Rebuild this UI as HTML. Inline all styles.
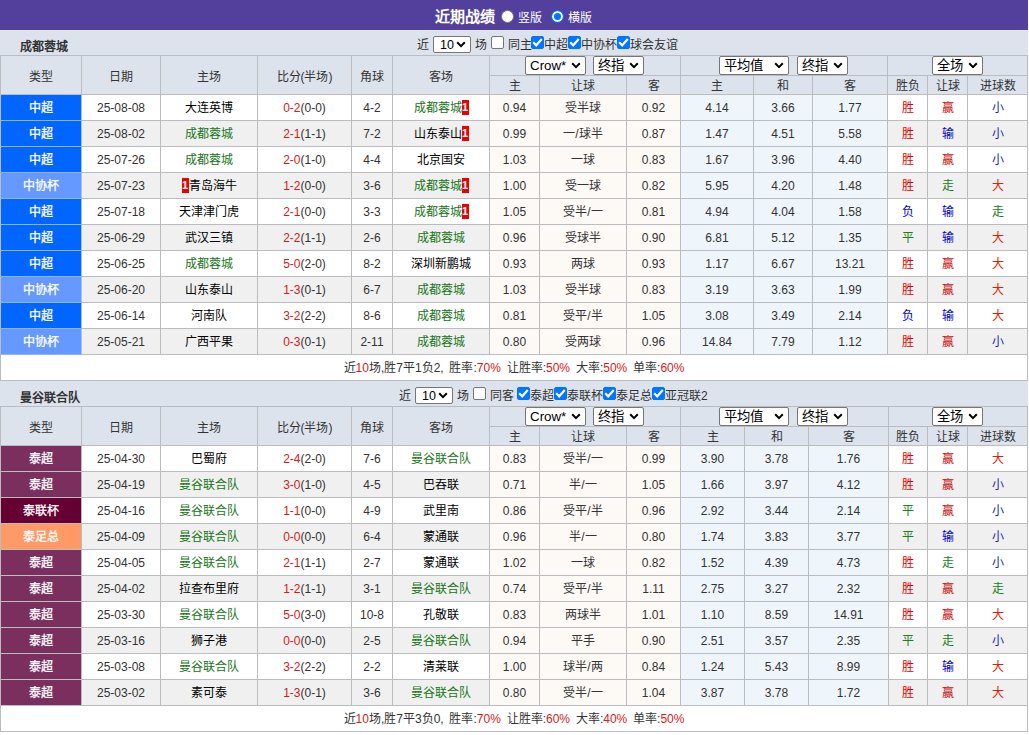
<!DOCTYPE html><html lang="zh-CN"><head><meta charset="utf-8"><style>html,body{margin:0;padding:0;background:#fff;}
body{width:1029px;height:735px;overflow:hidden;font-family:"Liberation Sans",sans-serif;font-size:12px;color:#333;}
#wrap{width:1028px;position:relative;}
.title{height:30px;background:#52409c;border-bottom:1px solid #e6e6fa;position:relative;color:#fff;}
.title b{position:absolute;left:435px;top:7px;font-size:15px;line-height:20px;}
.title .rd{position:absolute;top:10px;width:11px;height:11px;border-radius:50%;background:#fff;border:1px solid #767676;}
.title .rd{left:501px;}
.title .rd.on{left:551px;border:1px solid #0075ff;background:#0075ff;box-shadow:inset 0 0 0 2px #fff;}
.title .rt{position:absolute;top:10px;line-height:16px;font-size:12px;}
.title .rt{left:518px;}
.title .rd.on + .rt{left:568px;}
.band{height:25px;background:#dce3ed;position:relative;}
.band .tn{position:absolute;left:20px;top:9px;line-height:16px;font-size:12px;color:#333;}
.band .ct{position:absolute;top:7px;line-height:17px;white-space:nowrap;}
.band .sel.num{position:absolute;top:6px;width:38px;height:17px;font-size:13.33px;line-height:15px;}
.band .cbw{position:absolute;top:6px;height:13px;}
.sel{display:inline-block;position:relative;box-sizing:border-box;height:18px;border:1px solid #767676;border-radius:2px;background:#fff;color:#000;font-size:13.33px;line-height:16px;padding-left:4px;text-align:left;}
.sel .chev{position:absolute;right:4px;top:5px;}
.band .sel.num .chev{top:4px;}
.sel.num .n{font-size:12.5px;padding-left:2px;}
.cb{display:block;box-sizing:border-box;width:13px;height:13px;border:1px solid #767676;border-radius:2px;background:#fff;position:relative;}
.cb.on{background:#0075ff;border-color:#0075ff;}
.cb svg{position:absolute;left:-1px;top:-1px;}
.tb{border-collapse:collapse;table-layout:fixed;width:1028px;}
.tb th,.tb td{border:1px solid #babcc0;padding:0;text-align:center;font-weight:normal;white-space:nowrap;overflow:hidden;}
.tb th{background:#dce3ed;color:#333;}
.tb tr.h1 th{height:19px;line-height:19px;}
.tb tr.h1 th[rowspan]{padding-top:4px;line-height:34px;height:34px;}
.tb tr.h2 th{height:16px;line-height:16px;padding-top:2px;}
.tb td{height:24px;line-height:24px;padding-top:1px;}
.tb tr.ev td{background:#f0f0f0;}
.tb td.cr{background:#fdf9f5 !important;}
.tb td.av{background:#eff6fb !important;}
.tb td.ty{color:#fff;-webkit-text-stroke:0.3px #fff;}
.tb td.tb_{background:#0066ff;}
.tb tr td.tb{background:#0066ff;}
.tb tr td.tl{background:#6699ff;}
.tb tr td.tm{background:#7a2f5e;}
.tb tr td.td{background:#660033;}
.tb tr td.to{background:#ff9966;}
.tb th.sc{text-align:left;position:relative;}
.sel.hs{position:absolute;top:0;height:19px;line-height:17px;}
.tb tr.sum td{background:#fff;word-spacing:2.5px;padding-top:2px;line-height:23px;height:23px;}
.r{color:#d41a1a;}
.g{color:#167516;}
.k{color:#000;}
.bd{display:inline-block;font-style:normal;background:#e00;color:#fff;width:7px;height:15px;line-height:15px;font-size:11px;font-weight:bold;vertical-align:middle;text-align:center;position:relative;top:-1px;}
.cw{color:#dd0000;}
.cw2{color:#c81010;}
.cl{color:#0000cc;}
.cd{color:#1a801a;}
.cbig{color:#dd2200;}
.csm{color:#2424b4;}
.tb tr td.tb,.tb tr td.tl{border-top-color:#8fb5f7;border-bottom-color:#8fb5f7;border-right-color:#a3c2fa;}
.band.b1{height:24px;}
.band.b1 .tn{top:8px;}
.band.b1 .ct{top:6px;}
.band.b1 .sel.num,.band.b1 .cbw{top:5px;}
</style></head><body><div id="wrap"><div class="title"><b>近期战绩</b><span class="rd"></span><span class="rt">竖版</span><span class="rd on"></span><span class="rt">横版</span></div><div class="band b1"><b class="tn">成都蓉城</b><span class="ct" style="left:417px">近</span><span class="sel num" style="left:433px"><span class="n">10</span><svg class="chev" width="10" height="7" viewBox="0 0 10 7"><path d="M1.2 1.3 L5 5.1 L8.8 1.3" fill="none" stroke="#000" stroke-width="2"/></svg></span><span class="ct" style="left:475px">场</span><span class="cbw" style="left:491px"><span class="cb"></span></span><span class="ct" style="left:508px">同主</span><span class="cbw" style="left:531px"><span class="cb on"><svg width="13" height="13" viewBox="0 0 13 13"><path d="M2.2 6.3 L5.2 9.3 L10.8 3.1" fill="none" stroke="#fff" stroke-width="2.2"/></svg></span></span><span class="ct" style="left:544px">中超</span><span class="cbw" style="left:568px"><span class="cb on"><svg width="13" height="13" viewBox="0 0 13 13"><path d="M2.2 6.3 L5.2 9.3 L10.8 3.1" fill="none" stroke="#fff" stroke-width="2.2"/></svg></span></span><span class="ct" style="left:581px">中协杯</span><span class="cbw" style="left:617px"><span class="cb on"><svg width="13" height="13" viewBox="0 0 13 13"><path d="M2.2 6.3 L5.2 9.3 L10.8 3.1" fill="none" stroke="#fff" stroke-width="2.2"/></svg></span></span><span class="ct" style="left:630px">球会友谊</span></div><table class="tb"><colgroup><col style="width:81px"><col style="width:79px"><col style="width:97px"><col style="width:94px"><col style="width:41px"><col style="width:97px"><col style="width:50px"><col style="width:87px"><col style="width:54px"><col style="width:73px"><col style="width:59px"><col style="width:75px"><col style="width:40px"><col style="width:40px"><col style="width:60px"></colgroup><tr class="h1"><th rowspan="2">类型</th><th rowspan="2">日期</th><th rowspan="2">主场</th><th rowspan="2">比分(半场)</th><th rowspan="2">角球</th><th rowspan="2">客场</th><th colspan="3" class="sc"><span class="sel hs" style="width:61px;left:35px">Crow*<svg class="chev" width="10" height="7" viewBox="0 0 10 7"><path d="M1.2 1.3 L5 5.1 L8.8 1.3" fill="none" stroke="#000" stroke-width="2"/></svg></span><span class="sel hs" style="width:51px;left:103px">终指<svg class="chev" width="10" height="7" viewBox="0 0 10 7"><path d="M1.2 1.3 L5 5.1 L8.8 1.3" fill="none" stroke="#000" stroke-width="2"/></svg></span></th><th colspan="3" class="sc"><span class="sel hs" style="width:70px;left:38px">平均值<svg class="chev" width="10" height="7" viewBox="0 0 10 7"><path d="M1.2 1.3 L5 5.1 L8.8 1.3" fill="none" stroke="#000" stroke-width="2"/></svg></span><span class="sel hs" style="width:51px;left:116px">终指<svg class="chev" width="10" height="7" viewBox="0 0 10 7"><path d="M1.2 1.3 L5 5.1 L8.8 1.3" fill="none" stroke="#000" stroke-width="2"/></svg></span></th><th colspan="3" class="sc"><span class="sel hs" style="width:51px;left:44px">全场<svg class="chev" width="10" height="7" viewBox="0 0 10 7"><path d="M1.2 1.3 L5 5.1 L8.8 1.3" fill="none" stroke="#000" stroke-width="2"/></svg></span></th></tr><tr class="h2"><th>主</th><th>让球</th><th>客</th><th>主</th><th>和</th><th>客</th><th>胜负</th><th>让球</th><th>进球数</th></tr><tr class="od"><td class="ty tb">中超</td><td>25-08-08</td><td><span class="k">大连英博</span></td><td><span class="r">0-2</span>(0-0)</td><td>4-2</td><td><span class="g">成都蓉城</span><i class="bd">1</i></td><td class="cr">0.94</td><td class="cr">受半球</td><td class="cr">0.92</td><td class="av">4.14</td><td class="av">3.66</td><td class="av">1.77</td><td class="cw">胜</td><td class="cw2">赢</td><td class="csm">小</td></tr><tr class="ev"><td class="ty tb">中超</td><td>25-08-02</td><td><span class="g">成都蓉城</span></td><td><span class="r">2-1</span>(1-1)</td><td>7-2</td><td><span class="k">山东泰山</span><i class="bd">1</i></td><td class="cr">0.99</td><td class="cr">一/球半</td><td class="cr">0.87</td><td class="av">1.47</td><td class="av">4.51</td><td class="av">5.58</td><td class="cw">胜</td><td class="cl">输</td><td class="csm">小</td></tr><tr class="od"><td class="ty tb">中超</td><td>25-07-26</td><td><span class="g">成都蓉城</span></td><td><span class="r">2-0</span>(1-0)</td><td>4-4</td><td><span class="k">北京国安</span></td><td class="cr">1.03</td><td class="cr">一球</td><td class="cr">0.83</td><td class="av">1.67</td><td class="av">3.96</td><td class="av">4.40</td><td class="cw">胜</td><td class="cw2">赢</td><td class="csm">小</td></tr><tr class="ev"><td class="ty tl">中协杯</td><td>25-07-23</td><td><i class="bd">1</i><span class="k">青岛海牛</span></td><td><span class="r">1-2</span>(0-0)</td><td>3-6</td><td><span class="g">成都蓉城</span><i class="bd">1</i></td><td class="cr">1.00</td><td class="cr">受一球</td><td class="cr">0.82</td><td class="av">5.95</td><td class="av">4.20</td><td class="av">1.48</td><td class="cw">胜</td><td class="cd">走</td><td class="cbig">大</td></tr><tr class="od"><td class="ty tb">中超</td><td>25-07-18</td><td><span class="k">天津津门虎</span></td><td><span class="r">2-1</span>(0-0)</td><td>3-3</td><td><span class="g">成都蓉城</span><i class="bd">1</i></td><td class="cr">1.05</td><td class="cr">受半/一</td><td class="cr">0.81</td><td class="av">4.94</td><td class="av">4.04</td><td class="av">1.58</td><td class="cl">负</td><td class="cl">输</td><td class="cd">走</td></tr><tr class="ev"><td class="ty tb">中超</td><td>25-06-29</td><td><span class="k">武汉三镇</span></td><td><span class="r">2-2</span>(1-1)</td><td>2-6</td><td><span class="g">成都蓉城</span></td><td class="cr">0.96</td><td class="cr">受球半</td><td class="cr">0.90</td><td class="av">6.81</td><td class="av">5.12</td><td class="av">1.35</td><td class="cd">平</td><td class="cl">输</td><td class="cbig">大</td></tr><tr class="od"><td class="ty tb">中超</td><td>25-06-25</td><td><span class="g">成都蓉城</span></td><td><span class="r">5-0</span>(2-0)</td><td>8-2</td><td><span class="k">深圳新鹏城</span></td><td class="cr">0.93</td><td class="cr">两球</td><td class="cr">0.93</td><td class="av">1.17</td><td class="av">6.67</td><td class="av">13.21</td><td class="cw">胜</td><td class="cw2">赢</td><td class="cbig">大</td></tr><tr class="ev"><td class="ty tl">中协杯</td><td>25-06-20</td><td><span class="k">山东泰山</span></td><td><span class="r">1-3</span>(0-1)</td><td>6-7</td><td><span class="g">成都蓉城</span></td><td class="cr">1.03</td><td class="cr">受半球</td><td class="cr">0.83</td><td class="av">3.19</td><td class="av">3.63</td><td class="av">1.99</td><td class="cw">胜</td><td class="cw2">赢</td><td class="cbig">大</td></tr><tr class="od"><td class="ty tb">中超</td><td>25-06-14</td><td><span class="k">河南队</span></td><td><span class="r">3-2</span>(2-2)</td><td>8-6</td><td><span class="g">成都蓉城</span></td><td class="cr">0.81</td><td class="cr">受平/半</td><td class="cr">1.05</td><td class="av">3.08</td><td class="av">3.49</td><td class="av">2.14</td><td class="cl">负</td><td class="cl">输</td><td class="cbig">大</td></tr><tr class="ev"><td class="ty tl">中协杯</td><td>25-05-21</td><td><span class="k">广西平果</span></td><td><span class="r">0-3</span>(0-1)</td><td>2-11</td><td><span class="g">成都蓉城</span></td><td class="cr">0.80</td><td class="cr">受两球</td><td class="cr">0.96</td><td class="av">14.84</td><td class="av">7.79</td><td class="av">1.12</td><td class="cw">胜</td><td class="cw2">赢</td><td class="csm">小</td></tr><tr class="sum"><td colspan="15">近<span class="r">10</span>场,胜7平1负2, 胜率:<span class="r">70%</span> 让胜率:<span class="r">50%</span> 大率:<span class="r">50%</span> 单率:<span class="r">60%</span></td></tr></table><div class="band "><b class="tn">曼谷联合队</b><span class="ct" style="left:399px">近</span><span class="sel num" style="left:415px"><span class="n">10</span><svg class="chev" width="10" height="7" viewBox="0 0 10 7"><path d="M1.2 1.3 L5 5.1 L8.8 1.3" fill="none" stroke="#000" stroke-width="2"/></svg></span><span class="ct" style="left:457px">场</span><span class="cbw" style="left:473px"><span class="cb"></span></span><span class="ct" style="left:490px">同客</span><span class="cbw" style="left:517px"><span class="cb on"><svg width="13" height="13" viewBox="0 0 13 13"><path d="M2.2 6.3 L5.2 9.3 L10.8 3.1" fill="none" stroke="#fff" stroke-width="2.2"/></svg></span></span><span class="ct" style="left:530px">泰超</span><span class="cbw" style="left:554px"><span class="cb on"><svg width="13" height="13" viewBox="0 0 13 13"><path d="M2.2 6.3 L5.2 9.3 L10.8 3.1" fill="none" stroke="#fff" stroke-width="2.2"/></svg></span></span><span class="ct" style="left:567px">泰联杯</span><span class="cbw" style="left:603px"><span class="cb on"><svg width="13" height="13" viewBox="0 0 13 13"><path d="M2.2 6.3 L5.2 9.3 L10.8 3.1" fill="none" stroke="#fff" stroke-width="2.2"/></svg></span></span><span class="ct" style="left:616px">泰足总</span><span class="cbw" style="left:652px"><span class="cb on"><svg width="13" height="13" viewBox="0 0 13 13"><path d="M2.2 6.3 L5.2 9.3 L10.8 3.1" fill="none" stroke="#fff" stroke-width="2.2"/></svg></span></span><span class="ct" style="left:665px">亚冠联2</span></div><table class="tb"><colgroup><col style="width:81px"><col style="width:79px"><col style="width:97px"><col style="width:94px"><col style="width:41px"><col style="width:97px"><col style="width:50px"><col style="width:87px"><col style="width:54px"><col style="width:64px"><col style="width:64px"><col style="width:80px"><col style="width:39px"><col style="width:40px"><col style="width:60px"></colgroup><tr class="h1"><th rowspan="2">类型</th><th rowspan="2">日期</th><th rowspan="2">主场</th><th rowspan="2">比分(半场)</th><th rowspan="2">角球</th><th rowspan="2">客场</th><th colspan="3" class="sc"><span class="sel hs" style="width:61px;left:35px">Crow*<svg class="chev" width="10" height="7" viewBox="0 0 10 7"><path d="M1.2 1.3 L5 5.1 L8.8 1.3" fill="none" stroke="#000" stroke-width="2"/></svg></span><span class="sel hs" style="width:51px;left:103px">终指<svg class="chev" width="10" height="7" viewBox="0 0 10 7"><path d="M1.2 1.3 L5 5.1 L8.8 1.3" fill="none" stroke="#000" stroke-width="2"/></svg></span></th><th colspan="3" class="sc"><span class="sel hs" style="width:70px;left:38px">平均值<svg class="chev" width="10" height="7" viewBox="0 0 10 7"><path d="M1.2 1.3 L5 5.1 L8.8 1.3" fill="none" stroke="#000" stroke-width="2"/></svg></span><span class="sel hs" style="width:51px;left:116px">终指<svg class="chev" width="10" height="7" viewBox="0 0 10 7"><path d="M1.2 1.3 L5 5.1 L8.8 1.3" fill="none" stroke="#000" stroke-width="2"/></svg></span></th><th colspan="3" class="sc"><span class="sel hs" style="width:51px;left:43px">全场<svg class="chev" width="10" height="7" viewBox="0 0 10 7"><path d="M1.2 1.3 L5 5.1 L8.8 1.3" fill="none" stroke="#000" stroke-width="2"/></svg></span></th></tr><tr class="h2"><th>主</th><th>让球</th><th>客</th><th>主</th><th>和</th><th>客</th><th>胜负</th><th>让球</th><th>进球数</th></tr><tr class="od"><td class="ty tm">泰超</td><td>25-04-30</td><td><span class="k">巴蜀府</span></td><td><span class="r">2-4</span>(2-0)</td><td>7-6</td><td><span class="g">曼谷联合队</span></td><td class="cr">0.83</td><td class="cr">受半/一</td><td class="cr">0.99</td><td class="av">3.90</td><td class="av">3.78</td><td class="av">1.76</td><td class="cw">胜</td><td class="cw2">赢</td><td class="cbig">大</td></tr><tr class="ev"><td class="ty tm">泰超</td><td>25-04-19</td><td><span class="g">曼谷联合队</span></td><td><span class="r">3-0</span>(1-0)</td><td>4-5</td><td><span class="k">巴吞联</span></td><td class="cr">0.71</td><td class="cr">半/一</td><td class="cr">1.05</td><td class="av">1.66</td><td class="av">3.97</td><td class="av">4.12</td><td class="cw">胜</td><td class="cw2">赢</td><td class="csm">小</td></tr><tr class="od"><td class="ty td">泰联杯</td><td>25-04-16</td><td><span class="g">曼谷联合队</span></td><td><span class="r">1-1</span>(0-0)</td><td>4-9</td><td><span class="k">武里南</span></td><td class="cr">0.86</td><td class="cr">受平/半</td><td class="cr">0.96</td><td class="av">2.92</td><td class="av">3.44</td><td class="av">2.14</td><td class="cd">平</td><td class="cw2">赢</td><td class="csm">小</td></tr><tr class="ev"><td class="ty to">泰足总</td><td>25-04-09</td><td><span class="g">曼谷联合队</span></td><td><span class="r">0-0</span>(0-0)</td><td>6-4</td><td><span class="k">蒙通联</span></td><td class="cr">0.96</td><td class="cr">半/一</td><td class="cr">0.80</td><td class="av">1.74</td><td class="av">3.83</td><td class="av">3.77</td><td class="cd">平</td><td class="cl">输</td><td class="csm">小</td></tr><tr class="od"><td class="ty tm">泰超</td><td>25-04-05</td><td><span class="g">曼谷联合队</span></td><td><span class="r">2-1</span>(1-1)</td><td>2-7</td><td><span class="k">蒙通联</span></td><td class="cr">1.02</td><td class="cr">一球</td><td class="cr">0.82</td><td class="av">1.52</td><td class="av">4.39</td><td class="av">4.73</td><td class="cw">胜</td><td class="cd">走</td><td class="csm">小</td></tr><tr class="ev"><td class="ty tm">泰超</td><td>25-04-02</td><td><span class="k">拉查布里府</span></td><td><span class="r">1-2</span>(1-1)</td><td>3-1</td><td><span class="g">曼谷联合队</span></td><td class="cr">0.74</td><td class="cr">受平/半</td><td class="cr">1.11</td><td class="av">2.75</td><td class="av">3.27</td><td class="av">2.32</td><td class="cw">胜</td><td class="cw2">赢</td><td class="cd">走</td></tr><tr class="od"><td class="ty tm">泰超</td><td>25-03-30</td><td><span class="g">曼谷联合队</span></td><td><span class="r">5-0</span>(3-0)</td><td>10-8</td><td><span class="k">孔敬联</span></td><td class="cr">0.83</td><td class="cr">两球半</td><td class="cr">1.01</td><td class="av">1.10</td><td class="av">8.59</td><td class="av">14.91</td><td class="cw">胜</td><td class="cw2">赢</td><td class="cbig">大</td></tr><tr class="ev"><td class="ty tm">泰超</td><td>25-03-16</td><td><span class="k">狮子港</span></td><td><span class="r">0-0</span>(0-0)</td><td>2-5</td><td><span class="g">曼谷联合队</span></td><td class="cr">0.94</td><td class="cr">平手</td><td class="cr">0.90</td><td class="av">2.51</td><td class="av">3.57</td><td class="av">2.35</td><td class="cd">平</td><td class="cd">走</td><td class="csm">小</td></tr><tr class="od"><td class="ty tm">泰超</td><td>25-03-08</td><td><span class="g">曼谷联合队</span></td><td><span class="r">3-2</span>(2-2)</td><td>2-2</td><td><span class="k">清莱联</span></td><td class="cr">1.00</td><td class="cr">球半/两</td><td class="cr">0.84</td><td class="av">1.24</td><td class="av">5.43</td><td class="av">8.99</td><td class="cw">胜</td><td class="cl">输</td><td class="cbig">大</td></tr><tr class="ev"><td class="ty tm">泰超</td><td>25-03-02</td><td><span class="k">素可泰</span></td><td><span class="r">1-3</span>(0-1)</td><td>3-6</td><td><span class="g">曼谷联合队</span></td><td class="cr">0.80</td><td class="cr">受半/一</td><td class="cr">1.04</td><td class="av">3.87</td><td class="av">3.78</td><td class="av">1.72</td><td class="cw">胜</td><td class="cw2">赢</td><td class="cbig">大</td></tr><tr class="sum"><td colspan="15">近<span class="r">10</span>场,胜7平3负0, 胜率:<span class="r">70%</span> 让胜率:<span class="r">60%</span> 大率:<span class="r">40%</span> 单率:<span class="r">50%</span></td></tr></table></div></body></html>
